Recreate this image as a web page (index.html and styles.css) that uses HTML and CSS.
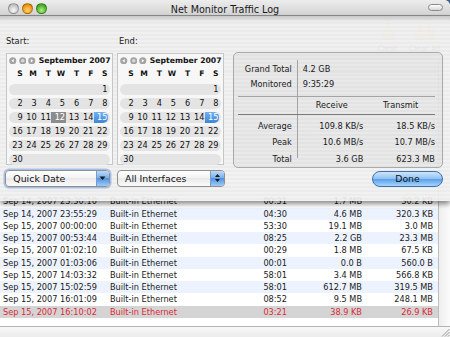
FILE: index.html
```html
<!DOCTYPE html>
<html lang="en">
  <head>
    <meta charset="UTF-8" />
    <title>Net Monitor Traffic Log</title>
    <link rel="stylesheet" href="styles.css">
  </head>
  <body>
    <div class="window">
      <div class="titlebar">
        <div class="lights">
          <span class="light gray"></span>
          <span class="light orange"></span>
          <span class="light green"></span>
        </div>
        <div class="title">Net Monitor Traffic Log</div>
        <div class="pill"></div>
      </div>

      <div class="content">
        <div class="toolbar">
          <div class="tool clear">
            <svg width="16" height="20" viewBox="0 0 16 20"><path d="M6 1h4v6l4 4v8H2v-8l4-4z" fill="#e2cf8a"/></svg>
            <span>Clear</span>
          </div>
          <div class="tool clear-all">
            <svg width="22" height="20" viewBox="0 0 22 20"><path d="M4 3h4v5l3 3v8H1v-8l3-3zM13 1h4v6l4 4v8h-9v-8l1-1z" fill="#e2cf8a"/></svg>
            <span>Clear All</span>
          </div>
        </div>

        <div class="log">
          <div class="table">
            <!-- header and older rows sit behind the sheet -->
            <div class="row head">
              <div class="c"></div>
              <div class="c"></div>
              <div class="c"></div>
              <div class="c"></div>
              <div class="c"></div>
            </div>
            <div class="body">
              <div class="row"></div>
              <div class="row"></div>
              <div class="row"></div>
              <div class="row"></div>
              <div class="row"></div>
              <div class="row"></div>
              <div class="row"></div>
              <div class="row"></div>
              <div class="row"></div>
              <div class="row"></div>
              <div class="row"><div class="c">Sep 14, 2007 23:30:10</div><div class="c">Built-in Ethernet</div><div class="c num">00:31</div><div class="c num">1.7 MB</div><div class="c num">30.2 KB</div></div>
              <div class="row"><div class="c">Sep 14, 2007 23:55:29</div><div class="c">Built-in Ethernet</div><div class="c num">04:30</div><div class="c num">4.6 MB</div><div class="c num">320.3 KB</div></div>
              <div class="row"><div class="c">Sep 15, 2007 00:00:00</div><div class="c">Built-in Ethernet</div><div class="c num">53:30</div><div class="c num">19.1 MB</div><div class="c num">3.0 MB</div></div>
              <div class="row"><div class="c">Sep 15, 2007 00:53:44</div><div class="c">Built-in Ethernet</div><div class="c num">08:25</div><div class="c num">2.2 GB</div><div class="c num">23.3 MB</div></div>
              <div class="row"><div class="c">Sep 15, 2007 01:02:10</div><div class="c">Built-in Ethernet</div><div class="c num">00:29</div><div class="c num">1.8 MB</div><div class="c num">67.5 KB</div></div>
              <div class="row"><div class="c">Sep 15, 2007 01:03:06</div><div class="c">Built-in Ethernet</div><div class="c num">00:01</div><div class="c num">0.0 B</div><div class="c num">560.0 B</div></div>
              <div class="row"><div class="c">Sep 15, 2007 14:03:32</div><div class="c">Built-in Ethernet</div><div class="c num">58:01</div><div class="c num">3.4 MB</div><div class="c num">566.8 KB</div></div>
              <div class="row"><div class="c">Sep 15, 2007 15:02:59</div><div class="c">Built-in Ethernet</div><div class="c num">58:01</div><div class="c num">612.7 MB</div><div class="c num">319.5 MB</div></div>
              <div class="row"><div class="c">Sep 15, 2007 16:01:09</div><div class="c">Built-in Ethernet</div><div class="c num">08:52</div><div class="c num">9.5 MB</div><div class="c num">248.1 MB</div></div>
              <div class="row sel"><div class="c">Sep 15, 2007 16:10:02</div><div class="c">Built-in Ethernet</div><div class="c num">03:21</div><div class="c num">38.9 KB</div><div class="c num">26.9 KB</div></div>
            </div>
          </div>
          <div class="vscroll"></div>
        </div>

        <div class="statusbar">
          <svg class="grip" width="10" height="10" viewBox="0 0 10 10">
            <path d="M9.5 2L2 9.5M9.5 5L5 9.5M9.5 8L8 9.5" stroke="#9a9a9a" stroke-width="1"/>
          </svg>
        </div>

        <!-- sheet over the log window -->
        <div class="sheet">
          <div class="dates">
            <div class="labels">
              <div class="lbl start">Start:</div>
              <div class="lbl">End:</div>
            </div>

            <div class="cals">
              <div class="cal">
                <div class="cal-head">
                  <svg class="nav" viewBox="0 0 8 8"><circle cx="4" cy="4" r="3.8" fill="#a3a3a3"/><path d="M5 2.2L2.6 4L5 5.8z" fill="#fff"/></svg>
                  <svg class="nav" viewBox="0 0 8 8"><circle cx="4" cy="4" r="3.8" fill="#a3a3a3"/><circle cx="4" cy="4" r="1.9" fill="#d8d8d8"/></svg>
                  <svg class="nav" viewBox="0 0 8 8"><circle cx="4" cy="4" r="3.8" fill="#a3a3a3"/><path d="M3 2.2L5.4 4L3 5.8z" fill="#fff"/></svg>
                  <span class="month">September 2007</span>
                </div>
                <div class="week dow"><span>S</span><span>M</span><span>T</span><span>W</span><span>T</span><span>F</span><span>S</span></div>
                <div class="week"><span></span><span></span><span></span><span></span><span></span><span></span><span>1</span></div>
                <div class="week"><span>2</span><span>3</span><span>4</span><span>5</span><span>6</span><span>7</span><span>8</span></div>
                <div class="week"><span>9</span><span>10</span><span>11</span><span class="picked">12</span><span>13</span><span>14</span><span class="today">15</span></div>
                <div class="week"><span>16</span><span>17</span><span>18</span><span>19</span><span>20</span><span>21</span><span>22</span></div>
                <div class="week"><span>23</span><span>24</span><span>25</span><span>26</span><span>27</span><span>28</span><span>29</span></div>
                <div class="week"><span>30</span><span></span><span></span><span></span><span></span><span></span><span></span></div>
              </div>

              <div class="cal">
                <div class="cal-head">
                  <svg class="nav" viewBox="0 0 8 8"><circle cx="4" cy="4" r="3.8" fill="#a3a3a3"/><path d="M5 2.2L2.6 4L5 5.8z" fill="#fff"/></svg>
                  <svg class="nav" viewBox="0 0 8 8"><circle cx="4" cy="4" r="3.8" fill="#a3a3a3"/><circle cx="4" cy="4" r="1.9" fill="#d8d8d8"/></svg>
                  <svg class="nav" viewBox="0 0 8 8"><circle cx="4" cy="4" r="3.8" fill="#a3a3a3"/><path d="M3 2.2L5.4 4L3 5.8z" fill="#fff"/></svg>
                  <span class="month">September 2007</span>
                </div>
                <div class="week dow"><span>S</span><span>M</span><span>T</span><span>W</span><span>T</span><span>F</span><span>S</span></div>
                <div class="week"><span></span><span></span><span></span><span></span><span></span><span></span><span>1</span></div>
                <div class="week"><span>2</span><span>3</span><span>4</span><span>5</span><span>6</span><span>7</span><span>8</span></div>
                <div class="week"><span>9</span><span>10</span><span>11</span><span>12</span><span>13</span><span>14</span><span class="today">15</span></div>
                <div class="week"><span>16</span><span>17</span><span>18</span><span>19</span><span>20</span><span>21</span><span>22</span></div>
                <div class="week"><span>23</span><span>24</span><span>25</span><span>26</span><span>27</span><span>28</span><span>29</span></div>
                <div class="week"><span>30</span><span></span><span></span><span></span><span></span><span></span><span></span></div>
              </div>
            </div>

            <div class="pops">
              <div class="popup focus quick">
                <span class="pop-text">Quick Date</span>
                <span class="pop-arrow">
                  <svg width="7" height="6" viewBox="0 0 7 6"><path d="M0.5 1.5h6L3.5 5z" fill="#1a1a1a"/></svg>
                </span>
              </div>
              <div class="popup iface">
                <span class="pop-text">All Interfaces</span>
                <span class="pop-arrow">
                  <svg width="7" height="10" viewBox="0 0 7 10"><path d="M1 4h5L3.5 1zM1 6h5L3.5 9z" fill="#1a1a1a"/></svg>
                </span>
              </div>
            </div>
          </div>

          <div class="side">
            <div class="stats">
              <div class="k">Grand Total</div>
              <div class="v wide">4.2 GB</div>
              <div class="k">Monitored</div>
              <div class="v wide">9:35:29</div>
              <div class="rule"></div>
              <div class="k"></div>
              <div class="h">Receive</div>
              <div class="h">Transmit</div>
              <div class="rule dark"></div>
              <div class="k">Average</div>
              <div class="v num">109.8 KB/s</div>
              <div class="v num">18.5 KB/s</div>
              <div class="k">Peak</div>
              <div class="v num">10.6 MB/s</div>
              <div class="v num">10.7 MB/s</div>
              <div class="k">Total</div>
              <div class="v num">3.6 GB</div>
              <div class="v num">623.3 MB</div>
            </div>
            <button class="done">Done</button>
          </div>
        </div>
      </div>
    </div>
  </body>
</html>
```

FILE: styles.css
```css
* {
  margin: 0;
  padding: 0;
  box-sizing: border-box;
}

html,
body {
  width: 450px;
  height: 337px;
  overflow: hidden;
}

body {
  background-color: #3f6494;
  font-family: "DejaVu Sans", sans-serif;
  color: #1a1a1a;
}

.window {
  width: 450px;
  height: 337px;
  background-color: #fff;
  border-top-right-radius: 6px;
  overflow: hidden;
  display: flex;
  flex-direction: column;
}

/* title bar */

.titlebar {
  height: 16px;
  flex: none;
  display: grid;
  grid-template-columns: 1fr auto 1fr;
  align-items: center;
  background: linear-gradient(#ededed, #d3d3d3);
  border-bottom: 1px solid #8c8c8c;
}

.lights {
  display: flex;
  gap: 3px;
  padding-left: 8px;
  padding-top: 1px;
}

.light {
  width: 11px;
  height: 11px;
  border-radius: 50%;
  border: 1px solid rgba(0, 0, 0, 0.25);
}

.light.gray {
  background: radial-gradient(circle at 50% 70%, #fafafa, #c9c9c9 60%, #a8a8a8);
}

.light.orange {
  background: radial-gradient(circle at 50% 70%, #ffd36a, #f09a1a 60%, #c86a00);
}

.light.green {
  background: radial-gradient(circle at 50% 70%, #b4f07a, #4cb431 60%, #2c8a1c);
}

.title {
  padding-top: 3px;
  font-size: 9.6px;
  color: #1a1a1a;
}

.pill {
  justify-self: end;
  margin-right: 7px;
  width: 15px;
  height: 7px;
  border: 1px solid #8a8a8a;
  border-radius: 4px;
  background: linear-gradient(#ffffff, #d6d6d6);
}

/* window content */

.content {
  flex: 1;
  position: relative;
  display: flex;
  flex-direction: column;
  min-height: 0;
}

.toolbar {
  height: 43.8px;
  flex: none;
  display: flex;
  justify-content: flex-end;
  gap: 6px;
  padding: 5px 7.5px 0 0;
  background-color: #e8e8e8;
}

.tool {
  display: flex;
  flex-direction: column;
  align-items: center;
  gap: 3px;
  font-size: 7.6px;
  color: #444;
}

.tool.clear {
  width: 26px;
}

.tool.clear-all {
  width: 36px;
}

.log {
  flex: 1;
  display: flex;
  min-height: 0;
}

.table {
  width: 438px;
  display: flex;
  flex-direction: column;
  overflow: hidden;
}

.row {
  display: grid;
  grid-template-columns: 107px 130px 53px 75px 73px;
  height: 12.25px;
  line-height: 12.25px;
  font-size: 8.2px;
  white-space: nowrap;
}

.row .c {
  padding: 0 3px;
  overflow: hidden;
}

.row .c:last-child {
  padding-right: 5px;
}

.row .num {
  text-align: right;
}

.row.head {
  height: 13px;
  background: linear-gradient(#ffffff, #e3e3e3);
  border-bottom: 1px solid #a8a8a8;
}

.body {
  flex: 1;
  background-color: #fff;
}

.body .row:nth-child(even) {
  background-color: #edf3fe;
}

.body .row.sel {
  background-color: #d4d4d4;
  color: #dc2a34;
}

.vscroll {
  flex: 1;
  background: linear-gradient(90deg, #eeeeee, #fbfbfb);
  border-left: 1px solid #bdbdbd;
}

.statusbar {
  height: 11px;
  flex: none;
  display: flex;
  justify-content: flex-end;
  align-items: flex-end;
  border-top: 1px solid #b3b3b3;
  background: linear-gradient(#f7f7f7, #ececec);
}

.grip {
  display: block;
}

/* sheet */

.sheet {
  position: absolute;
  top: 0;
  left: 0;
  right: 0;
  height: 184.5px;
  display: flex;
  padding-left: 6px;
  background: repeating-linear-gradient(
    rgba(241, 241, 241, 0.93) 0 2px,
    rgba(235, 235, 235, 0.93) 2px 4px
  );
  box-shadow: 0 3px 5px rgba(0, 0, 0, 0.45), inset 0 7px 5px -5px rgba(0, 0, 0, 0.22);
}

.dates {
  width: 219px;
  display: flex;
  flex-direction: column;
}

.labels {
  display: flex;
  margin-top: 18px;
  height: 14px;
  line-height: 14px;
  font-size: 8.4px;
  color: #222;
}

.lbl.start {
  width: 113px;
}

.cals {
  display: flex;
  gap: 4px;
  margin-top: 5px;
}

.cal {
  width: 107px;
  height: 112px;
  background-color: #f7f7f7;
  border: 1px solid #c6c6c6;
}

.cal-head {
  height: 13px;
  display: flex;
  align-items: center;
  gap: 2px;
  padding-left: 2.3px;
}

.nav {
  width: 7.5px;
  height: 7.5px;
}

.month {
  margin-left: 1px;
  font-size: 7.7px;
  font-weight: bold;
  color: #111;
}

.week {
  display: grid;
  grid-template-columns: repeat(7, 1fr);
  height: 10.7px;
  line-height: 10.7px;
  margin: 3.2px 2px 0;
  padding-right: 2px;
  border-radius: 5.5px;
  background-color: #e4e4e4;
  font-size: 8.2px;
  color: #111;
}

.week span {
  text-align: right;
  padding-right: 0.5px;
}

.week.dow {
  height: 14.3px;
  line-height: 14.3px;
  margin-top: 0;
  background: none;
  font-size: 7.6px;
  font-weight: bold;
}

.week .picked {
  background-color: #8c8c8c;
  color: #fff;
}

.week .today {
  background: linear-gradient(#74b0ef, #3a86da);
  color: #fff;
  border-radius: 0 5px 5px 0;
}

.pops {
  display: flex;
  margin-top: 5px;
}

.popup {
  height: 16.7px;
  display: flex;
  align-items: center;
  border: 1px solid #8f8f8f;
  border-radius: 4px;
  overflow: hidden;
  background: linear-gradient(#ffffff, #f2f2f2 50%, #e9e9e9 50%, #fbfbfb);
  font-size: 9.4px;
  color: #111;
}

.popup.quick {
  width: 105px;
  margin-left: -1px;
}

.popup.iface {
  width: 108.3px;
  margin-left: 6.7px;
}

.popup.focus {
  box-shadow: 0 0 0 1.5px rgba(118, 162, 222, 0.6);
}

.pop-text {
  flex: 1;
  padding-left: 7.3px;
}

.pop-arrow {
  width: 13.5px;
  height: 100%;
  display: flex;
  align-items: center;
  justify-content: center;
  border-left: 1px solid #7b9cc6;
  background: linear-gradient(#bcdaf7, #76acea 50%, #4f93e2 50%, #9fccf6);
}

.pop-arrow svg {
  display: block;
}

.side {
  width: 210.6px;
  margin-left: 7.7px;
  display: flex;
  flex-direction: column;
  align-items: flex-end;
}

.stats {
  width: 100%;
  height: 116.6px;
  margin-top: 35.7px;
  padding: 9.1px 7.3px 0 4.3px;
  display: grid;
  grid-template-columns: 59.3px 69px 1fr;
  grid-template-rows: 15px 15px auto 13.3px auto 16.7px 16.7px 16.7px;
  align-items: center;
  border: 1px solid #a9a9a9;
  border-radius: 5px;
  background: linear-gradient(#a3a3a3, #a3a3a3) no-repeat 63.6px 7.3px / 1px 98px,
    rgba(0, 0, 0, 0.035);
  font-size: 8.2px;
  color: #1a1a1a;
  white-space: nowrap;
}

.stats .k {
  text-align: right;
  padding-right: 5.6px;
}

.stats .v {
  padding-left: 5.4px;
}

.stats .v.wide {
  grid-column: 2 / 4;
}

.stats .v.num {
  text-align: right;
  padding-left: 0;
}

.stats .v.num:nth-child(3n + 2) {
  padding-right: 3px;
}

.stats .h {
  text-align: center;
}

.stats .h:first-of-type {
  padding-right: 3px;
}

.stats .rule {
  grid-column: 1 / -1;
  height: 1px;
  margin-top: 2.2px;
  background-color: #a3a3a3;
}

.stats .rule.dark {
  margin-top: 0;
  margin-bottom: 0.65px;
  background-color: #7c7c7c;
}

.done {
  width: 71.6px;
  height: 15.7px;
  margin-top: 2.7px;
  border: 1px solid #3b6fae;
  border-radius: 8px;
  background: linear-gradient(#cfe6fb, #8fc2f2 48%, #5aa0ea 52%, #a7d5fb);
  font-family: "DejaVu Sans", sans-serif;
  font-size: 9.3px;
  color: #111;
  cursor: pointer;
}
```
